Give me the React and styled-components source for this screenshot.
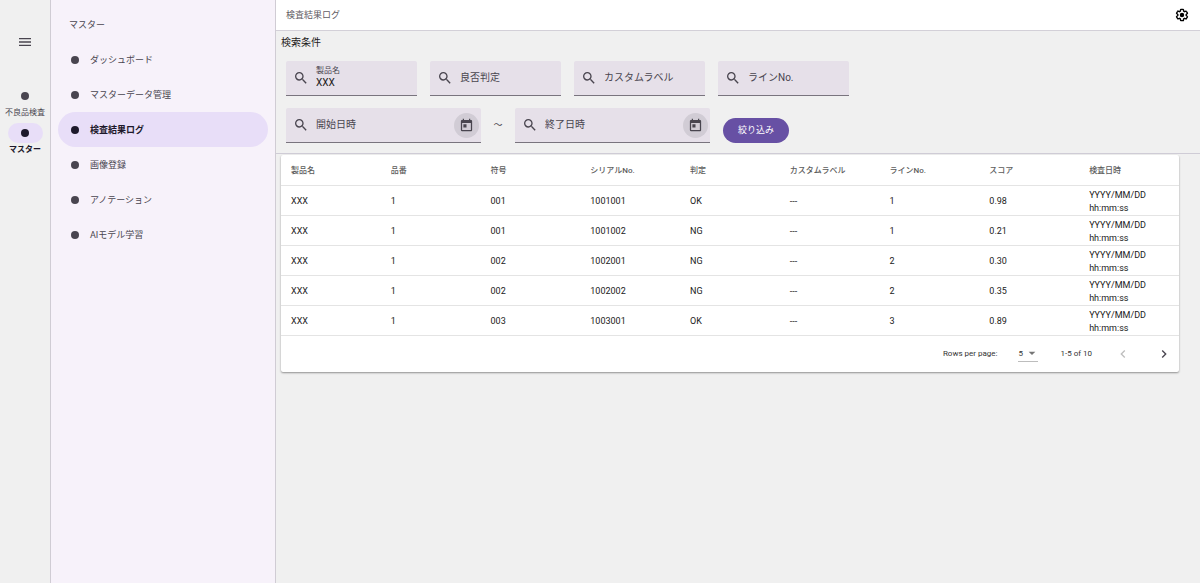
import React, { useState } from "react";
import styled, { createGlobalStyle, css } from "styled-components";
import {
  MdMenu,
  MdSearch,
  MdToday,
  MdChevronLeft,
  MdChevronRight,
  MdArrowDropDown,
} from "react-icons/md";

const GlobalStyle = createGlobalStyle`
  * { box-sizing: border-box; }
  body {
    margin: 0;
    background: #f0f0f0;
    color: #1d1b20;
    font-family: Roboto, "Noto Sans CJK JP", sans-serif;
    font-size: 9px;
    line-height: 13px;
  }
  button, input, select { font: inherit; color: inherit; }
`;

const Shell = styled.div`
  display: flex;
  min-height: 100vh;
`;

const Rail = styled.nav`
  flex: 0 0 51px;
  display: flex;
  flex-direction: column;
  align-items: center;
  gap: 4px;
  padding-top: 34px;
  border-right: 1px solid #d0ccd4;
`;

const IconButton = styled.button`
  display: flex;
  align-items: center;
  justify-content: center;
  width: ${(p) => p.$size}px;
  height: ${(p) => p.$size}px;
  padding: 0;
  border: 0;
  border-radius: 50%;
  background: ${(p) => (p.$filled ? "#d1ccd5" : "transparent")};
  color: ${(p) => (p.$dark ? "#000" : "#49454f")};
  cursor: pointer;
  &:disabled {
    color: #bdbdbd;
    cursor: default;
  }
`;

const RailMenu = styled.div`
  margin-bottom: 32px;
`;

const Dot = styled.span`
  flex: none;
  width: 8px;
  height: 8px;
  border-radius: 50%;
  background: currentColor;
`;

const RailLink = styled.a`
  display: flex;
  flex-direction: column;
  align-items: center;
  font-size: 8px;
  white-space: nowrap;
  text-decoration: none;
  color: #49454f;
  ${(p) =>
    p.$active &&
    css`
      color: #1d192b;
      font-weight: 700;
    `}
`;

const RailPill = styled.span`
  display: flex;
  align-items: center;
  justify-content: center;
  width: 35px;
  height: 20px;
  border-radius: 10px;
  background: ${(p) => (p.$active ? "#e8def8" : "transparent")};
`;

const Drawer = styled.nav`
  flex: 0 0 225px;
  padding: 7px;
  background: #f7f2fa;
  border-right: 1px solid #d0ccd4;
`;

const DrawerTitle = styled.h2`
  margin: 0;
  padding: 12px 11px 10px;
  font-size: 9px;
  font-weight: 400;
  color: #49454f;
`;

const DrawerLink = styled.a`
  display: flex;
  align-items: center;
  gap: 11px;
  height: 35px;
  padding: 0 13px;
  border-radius: 18px;
  text-decoration: none;
  color: #49454f;
  ${(p) =>
    p.$active &&
    css`
      background: #e8def8;
      color: #1d192b;
      font-weight: 700;
    `}
`;

const DrawerText = styled.span`
  padding-top: 2px;
`;

const Main = styled.main`
  flex: 1;
  min-width: 0;
`;

const TopBar = styled.header`
  display: flex;
  align-items: center;
  justify-content: space-between;
  height: 31px;
  padding: 0 10px;
  background: #fff;
  border-bottom: 1px solid #d3d0d8;
`;

const PageTitle = styled.h1`
  margin: 0;
  font-size: 9px;
  font-weight: 400;
  color: #5f5c63;
`;

const Filters = styled.form`
  padding: 5px 5px 10px;
  border-bottom: 1px solid #cfccd6;
`;

const FiltersTitle = styled.h2`
  margin: 0 0 12px;
  font-size: 10px;
  font-weight: 400;
`;

const FilterRow = styled.div`
  display: flex;
  flex-wrap: wrap;
  align-items: flex-end;
  gap: 12px 13px;
  padding-left: 5px;
  & + & {
    margin-top: 12px;
  }
`;

const Field = styled.div`
  display: flex;
  align-items: center;
  width: ${(p) => (p.$wide ? 195 : 131)}px;
  height: 35px;
  padding: 0 2px 0 7px;
  background: #e6e0e9;
  border-bottom: 1px solid #79747e;
  border-radius: 2px 2px 0 0;
  color: #49454f;
  svg { flex: none; }
`;

const FieldBody = styled.div`
  flex: 1;
  min-width: 0;
  display: flex;
  flex-direction: column;
  padding-left: 7px;
`;

const FieldLabel = styled.label`
  font-size: 8px;
  line-height: 10px;
`;

const FieldInput = styled.input`
  width: 100%;
  padding: 0;
  border: 0;
  outline: 0;
  background: transparent;
  font-size: 10px;
  line-height: 14px;
  color: #1d1b20;
  &::placeholder {
    color: #49454f;
    opacity: 1;
  }
`;

const DateRange = styled.div`
  display: flex;
  align-items: center;
`;

const RangeMark = styled.span`
  width: 34px;
  text-align: center;
  color: #49454f;
`;

const SubmitButton = styled.button`
  height: 25px;
  padding: 0 15px;
  border: 0;
  border-radius: 13px;
  background: #6750a4;
  color: #fff;
  cursor: pointer;
`;

const Card = styled.section`
  margin: 1px 21px 0 5px;
  background: #fff;
  border-radius: 2px;
  box-shadow: 0 1px 2px rgba(0, 0, 0, 0.4);
`;

const Table = styled.table`
  width: 100%;
  table-layout: fixed;
  border-collapse: separate;
  border-spacing: 0;
  th, td {
    height: 30px;
    padding: 0 10px;
    border-bottom: 1px solid #e4e4e4;
    text-align: left;
  }
  th {
    height: 31px;
    font-size: 8px;
    font-weight: 500;
    color: #5c5c5c;
  }
  td {
    padding-top: 2px;
    color: #212121;
  }
`;

const Pager = styled.footer`
  display: flex;
  align-items: center;
  justify-content: flex-end;
  height: 36px;
  padding: 0 5px 1px 0;
  font-size: 8px;
  color: #333;
`;

const SelectWrap = styled.span`
  display: inline-flex;
  align-items: center;
  position: relative;
  width: 20px;
  height: 17px;
  margin: 0 22px 0 21px;
  border-bottom: 1px solid #bdbdbd;
  svg {
    position: absolute;
    right: -2px;
    color: #757575;
    pointer-events: none;
  }
`;

const PageSize = styled.select`
  width: 100%;
  padding: 0;
  border: 0;
  outline: 0;
  appearance: none;
  background: transparent;
`;

const PagerButtons = styled.span`
  display: flex;
  gap: 21px;
  margin-left: 21px;
`;

const menuItems = [
  "ダッシュボード",
  "マスターデータ管理",
  "検査結果ログ",
  "画像登録",
  "アノテーション",
  "AIモデル学習",
];

const columns = ["製品名", "品番", "符号", "シリアルNo.", "判定", "カスタムラベル", "ラインNo.", "スコア", "検査日時"];

const rows = [
  ["XXX", "1", "001", "1001001", "OK", "---", "1", "0.98"],
  ["XXX", "1", "001", "1001002", "NG", "---", "1", "0.21"],
  ["XXX", "1", "002", "1002001", "NG", "---", "2", "0.30"],
  ["XXX", "1", "002", "1002002", "NG", "---", "2", "0.35"],
  ["XXX", "1", "003", "1003001", "OK", "---", "3", "0.89"],
];

function GearIcon() {
  return (
    <svg width="14" height="14" viewBox="0 0 24 24" aria-hidden="true">
      <path
        fill="none"
        stroke="currentColor"
        strokeWidth="2.4"
        strokeLinejoin="round"
        d="M19.14 12.94c.04-.3.06-.61.06-.94 0-.32-.02-.64-.07-.94l2.03-1.58c.18-.14.23-.41.12-.61l-1.92-3.32c-.12-.22-.37-.29-.59-.22l-2.39.96c-.5-.38-1.03-.7-1.62-.94L14.4 2.81c-.04-.24-.24-.41-.48-.41h-3.84c-.24 0-.43.17-.47.41L9.25 5.35C8.66 5.59 8.12 5.92 7.63 6.29L5.24 5.33c-.22-.08-.47 0-.59.22L2.74 8.87c-.12.21-.08.47.12.61l2.03 1.58C4.84 11.36 4.8 11.69 4.8 12s.02.64.07.94l-2.03 1.58c-.18.14-.23.41-.12.61l1.92 3.32c.12.22.37.29.59.22l2.39-.96c.5.38 1.03.7 1.62.94l.36 2.54c.05.24.24.41.48.41h3.84c.24 0 .44-.17.47-.41l.36-2.54c.59-.24 1.13-.56 1.62-.94l2.39.96c.22.08.47 0 .59-.22l1.92-3.32c.12-.22.07-.47-.12-.61z"
      />
      <circle cx="12" cy="12" r="3.8" fill="currentColor" />
    </svg>
  );
}

function SearchField({ label }) {
  return (
    <Field>
      <MdSearch size={16} />
      <FieldBody>
        <FieldInput type="text" placeholder={label} aria-label={label} />
      </FieldBody>
    </Field>
  );
}

function DateField({ label }) {
  return (
    <Field $wide>
      <MdSearch size={16} />
      <FieldBody>
        <FieldInput type="text" placeholder={label} aria-label={label} />
      </FieldBody>
      <IconButton type="button" $size={25} $filled aria-label={`${label}を選択`}>
        <MdToday size={15} />
      </IconButton>
    </Field>
  );
}

export default function App() {
  const [product, setProduct] = useState("XXX");
  const [pageSize, setPageSize] = useState("5");

  return (
    <>
      <GlobalStyle />
      <Shell>
        <Rail>
          <RailMenu>
            <IconButton $size={16} aria-label="メニュー">
              <MdMenu size={16} />
            </IconButton>
          </RailMenu>
          <RailLink href="#inspection">
            <RailPill>
              <Dot />
            </RailPill>
            不良品検査
          </RailLink>
          <RailLink href="#master" $active>
            <RailPill $active>
              <Dot />
            </RailPill>
            マスター
          </RailLink>
        </Rail>

        <Drawer>
          <DrawerTitle>マスター</DrawerTitle>
          {menuItems.map((item) => (
            <DrawerLink key={item} href={`#${item}`} $active={item === "検査結果ログ"}>
              <Dot />
              <DrawerText>{item}</DrawerText>
            </DrawerLink>
          ))}
        </Drawer>

        <Main>
          <TopBar>
            <PageTitle>検査結果ログ</PageTitle>
            <IconButton $size={16} $dark aria-label="設定">
              <GearIcon />
            </IconButton>
          </TopBar>

          <Filters onSubmit={(e) => e.preventDefault()}>
            <FiltersTitle>検索条件</FiltersTitle>
            <FilterRow>
              <Field>
                <MdSearch size={16} />
                <FieldBody>
                  <FieldLabel htmlFor="product">製品名</FieldLabel>
                  <FieldInput
                    id="product"
                    type="text"
                    value={product}
                    onChange={(e) => setProduct(e.target.value)}
                  />
                </FieldBody>
              </Field>
              <SearchField label="良否判定" />
              <SearchField label="カスタムラベル" />
              <SearchField label="ラインNo." />
            </FilterRow>
            <FilterRow>
              <DateRange>
                <DateField label="開始日時" />
                <RangeMark>～</RangeMark>
                <DateField label="終了日時" />
              </DateRange>
              <SubmitButton type="submit">絞り込み</SubmitButton>
            </FilterRow>
          </Filters>

          <Card>
            <Table>
              <thead>
                <tr>
                  {columns.map((c) => (
                    <th key={c} scope="col">{c}</th>
                  ))}
                </tr>
              </thead>
              <tbody>
                {rows.map((r) => (
                  <tr key={r[3]}>
                    {r.map((cell, i) => (
                      <td key={columns[i]}>{cell}</td>
                    ))}
                    <td>
                      YYYY/MM/DD
                      <br />
                      hh:mm:ss
                    </td>
                  </tr>
                ))}
              </tbody>
            </Table>
            <Pager>
              <label htmlFor="page-size">Rows per page:</label>
              <SelectWrap>
                <PageSize id="page-size" value={pageSize} onChange={(e) => setPageSize(e.target.value)}>
                  <option>5</option>
                  <option>10</option>
                </PageSize>
                <MdArrowDropDown size={16} />
              </SelectWrap>
              <span>1-5 of 10</span>
              <PagerButtons>
                <IconButton $size={20} disabled aria-label="前のページ">
                  <MdChevronLeft size={16} />
                </IconButton>
                <IconButton $size={20} aria-label="次のページ">
                  <MdChevronRight size={16} />
                </IconButton>
              </PagerButtons>
            </Pager>
          </Card>
        </Main>
      </Shell>
    </>
  );
}
